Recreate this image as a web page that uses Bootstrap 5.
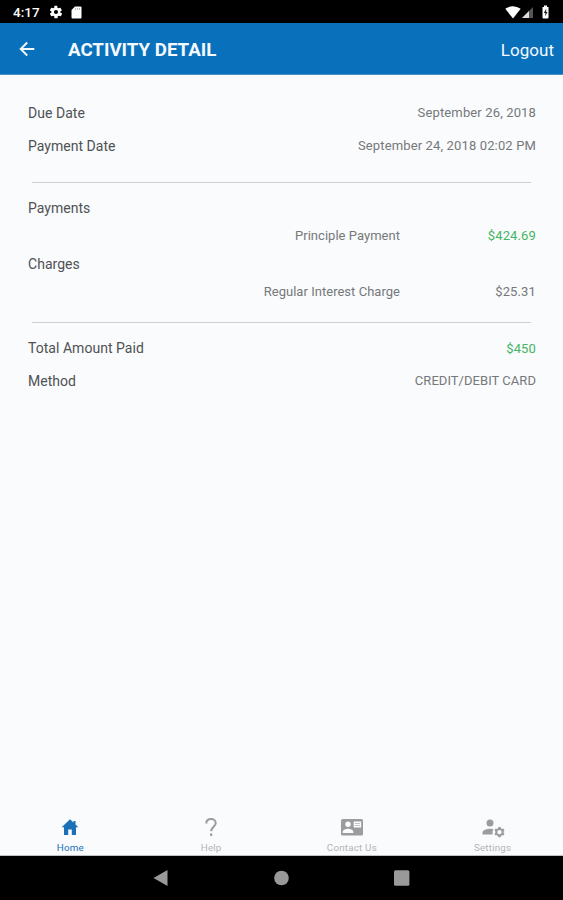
<!DOCTYPE html>
<html lang="en">
<head>
<meta charset="utf-8">
<meta name="viewport" content="width=device-width, initial-scale=1">
<title>Activity Detail</title>
<link href="https://cdn.jsdelivr.net/npm/bootstrap@5.3.0/dist/css/bootstrap.min.css" rel="stylesheet">
<style>
body{font-family:Roboto,"Liberation Sans",sans-serif;background:#f9fbfd;color:#505153}
svg{display:block;flex:none}
.status-strip{height:23px;background:#000;color:#fff;font-size:13.5px;font-weight:500;padding:1px 12px 0 13px}
.status-strip .gear{margin-left:9px}
.app-bar{height:52px;background:#0971bb;color:#f4f9ff;padding:1px 9px 0 19px;border-bottom:1px solid #4a90c8}
.app-title{font-size:18.7px;font-weight:700;margin:3px 0 0 33px;line-height:1}
.logout{font-size:17px;letter-spacing:.03px;color:inherit;line-height:1;margin-top:3px}
.detail{padding:21px 27px 0 28px}
.line-lg{height:33px}
.line-sm{height:28px}
.label{font-size:14px;letter-spacing:.03px}
.dates .label{padding-top:2px}
.amount{font-size:13px;letter-spacing:.14px;color:#77787a}
.item{width:372px;text-align:right;letter-spacing:.03px}
.method{letter-spacing:.04px}
.positive{color:#44b562}
.rule{height:1px;background:#cdcfd1;margin:20px 5px 11px 4px}
.rule-two{margin:16px 5px 9px 4px}
.last-line{height:32px}
.tabs{height:40px;border-bottom:1px solid #c0c1c2}
.tab{color:#9b9c9d;font-size:9.8px;line-height:11px;letter-spacing:.2px}
.tab span{color:#b4b5b7;margin-top:4px}
.tab.current,.tab.current span{color:#1b70b8}
.sys-nav{height:44px;background:#000;padding-left:152px;gap:102px}
</style>
<script src="https://cdn.jsdelivr.net/npm/bootstrap@5.3.0/dist/js/bootstrap.bundle.min.js"></script>
</head>
<body>
<div class="d-flex flex-column vh-100 overflow-hidden">
  <div class="status-strip d-flex align-items-center">
    <span>4:17</span>
    <svg class="gear" width="14" height="14" viewBox="0 0 24 24" fill="#fff"><path fill-rule="evenodd" d="M19.4 13a7.600 7.600 0 0 0 0-2l2.300-1.700c.2-.2.3-.5.1-.7l-2.200-3.700c-.1-.3-.4-.3-.7-.3l-2.600 1.100a8 8 0 0 0-1.800-1l-.4-2.800c0-.3-.2-.5-.5-.5H9.800c-.3 0-.5.2-.5.5l-.4 2.800a8 8 0 0 0-1.700 1L4.500 4.600c-.2-.1-.5 0-.6.3L1.700 8.600c-.1.200-.1.500.1.700L4.200 11a8 8 0 0 0 0 2l-2.400 1.700c-.2.200-.2.500-.1.700l2.200 3.700c.1.300.4.300.6.300l2.700-1.100c.5.400 1.100.8 1.700 1l.4 2.800c0 .3.200.5.500.5h4.400c.3 0 .5-.2.500-.5l.4-2.800c.7-.3 1.300-.6 1.800-1l2.600 1.100c.3.100.6 0 .7-.3l2.200-3.700c.1-.2.1-.5-.1-.7zM12 15.500a3.500 3.500 0 1 1 0-7 3.500 3.500 0 0 1 0 7z"/></svg>
    <svg class="ms-2" width="11" height="13" viewBox="0 0 11 13"><path fill="#fff" d="M4 .5h5.500a1 1 0 0 1 1 1v10a1 1 0 0 1-1 1h-8a1 1 0 0 1-1-1V4z"/><path stroke="#aaa" stroke-width=".8" d="M4.500 2v2M6.500 2v2M8.500 2v2"/></svg>
    <svg class="ms-auto" width="16" height="13" viewBox="0 0 16 13"><path fill="#fff" d="M.3 2.800Q8-2.200 15.700 2.800L8 12.500z"/></svg>
    <svg class="me-1" width="13" height="13" viewBox="0 0 13 13"><path fill="#555" d="M12 1v11H1z"/><path fill="#ddd" d="M8 5v7H1z"/></svg>
    <svg width="13" height="14" viewBox="0 0 13 14"><path fill="#fff" d="M6 .5h3V2h1.500v10.500q0 1-1 1h-4q-1 0-1-1V2H6z"/><path fill="#222" d="M8.200 3.700 5.800 8h1.500v3.200L9.500 7H8.200z"/></svg>
  </div>
  <header class="app-bar d-flex align-items-center">
    <svg width="16" height="16" viewBox="0 0 16 16" fill="none" stroke="#f4f9ff" stroke-width="1.900"><path d="M15.300 8H2M8.200 1.500 1.700 8l6.500 6.500"/></svg>
    <h1 class="app-title">ACTIVITY DETAIL</h1>
    <a href="#" class="logout ms-auto text-decoration-none">Logout</a>
  </header>
  <main class="detail flex-grow-1">
    <div class="dates">
      <div class="line-lg d-flex align-items-center justify-content-between"><span class="label">Due Date</span><span class="amount">September 26, 2018</span></div>
      <div class="line-lg d-flex align-items-center justify-content-between"><span class="label">Payment Date</span><span class="amount">September 24, 2018 02:02 PM</span></div>
    </div>
    <div class="rule"></div>
    <div class="line-sm d-flex align-items-center"><span class="label">Payments</span></div>
    <div class="line-sm d-flex align-items-center justify-content-between"><span class="amount item">Principle Payment</span><span class="amount positive">$424.69</span></div>
    <div class="line-sm d-flex align-items-center"><span class="label">Charges</span></div>
    <div class="line-sm d-flex align-items-center justify-content-between"><span class="amount item">Regular Interest Charge</span><span class="amount">$25.31</span></div>
    <div class="rule rule-two"></div>
    <div class="line-lg d-flex align-items-center justify-content-between"><span class="label">Total Amount Paid</span><span class="amount positive">$450</span></div>
    <div class="last-line d-flex align-items-center justify-content-between"><span class="label">Method</span><span class="amount method">CREDIT/DEBIT CARD</span></div>
  </main>
  <nav class="tabs row g-0 flex-shrink-0">
    <div class="tab current col d-flex flex-column align-items-center"><svg width="24" height="22" viewBox="0 0 24 22"><path fill="currentColor" d="M12 3.200 3.700 11.200H6V19h4.200v-5.500h3.600V19H18v-7.800h2.300L17.500 8.500V5h-2v1.600z"/></svg><span>Home</span></div>
    <div class="tab col d-flex flex-column align-items-center"><svg width="24" height="22" viewBox="0 0 24 22"><path fill="none" stroke="currentColor" stroke-width="2" d="M7.300 7.500C7.300 4.700 9.200 3 12 3s4.700 1.800 4.700 4.200c0 3.300-4.500 4-4.500 8"/><path fill="currentColor" d="M11 17.500h2.300v2.400H11z"/></svg><span>Help</span></div>
    <div class="tab col d-flex flex-column align-items-center"><svg width="24" height="22" viewBox="0 0 24 22"><rect x="1" y="3" width="22" height="16.500" rx="1.500" fill="currentColor"/><g fill="#f9fbfd"><circle cx="8" cy="8.300" r="2.700"/><path d="M2.700 17v-1.200c0-2 3.500-3.100 5.300-3.100s5.400 1.100 5.400 3.100V17zM13.700 5.500h7.500v6h-7.500z"/></g><path stroke="#c4c5c6" stroke-width="1" d="M15 7.500h5M15 9.500h5"/></svg><span>Contact Us</span></div>
    <div class="tab col d-flex flex-column align-items-center"><svg width="24" height="22" viewBox="0 0 24 22" fill="currentColor"><circle cx="9" cy="7" r="3.500"/><path d="M1.500 18.500v-1.800c0-2.600 4.600-4 7.500-4q1.700 0 3.300.4a8 8 0 0 0-.5 5.400z"/><path fill-rule="evenodd" d="m17 12.300.4-1.300h2.200l.4 1.300 1.100.6 1.300-.3 1.100 1.900-.9 1v1.200l.9 1-1.100 1.900-1.300-.3-1.100.6-.4 1.300h-2.200l-.4-1.300-1.100-.6-1.300.3-1.100-1.900.9-1v-1.200l-.9-1 1.100-1.900 1.300.3zM18.500 13.900a2.200 2.200 0 1 0 0 4.400 2.200 2.200 0 0 0 0-4.400z"/></svg><span>Settings</span></div>
  </nav>
  <div class="sys-nav d-flex align-items-center flex-shrink-0">
    <svg width="18" height="18" viewBox="0 0 18 18"><path fill="#999" d="M1.500 9 15.500 1v16z"/></svg>
    <svg width="18" height="18" viewBox="0 0 18 18"><circle cx="9.500" cy="9" r="7.300" fill="#999"/></svg>
    <svg width="18" height="18" viewBox="0 0 18 18"><rect x="2" y="1.300" width="15.400" height="15.400" rx="1.500" fill="#999"/></svg>
  </div>
</div>
</body>
</html>
